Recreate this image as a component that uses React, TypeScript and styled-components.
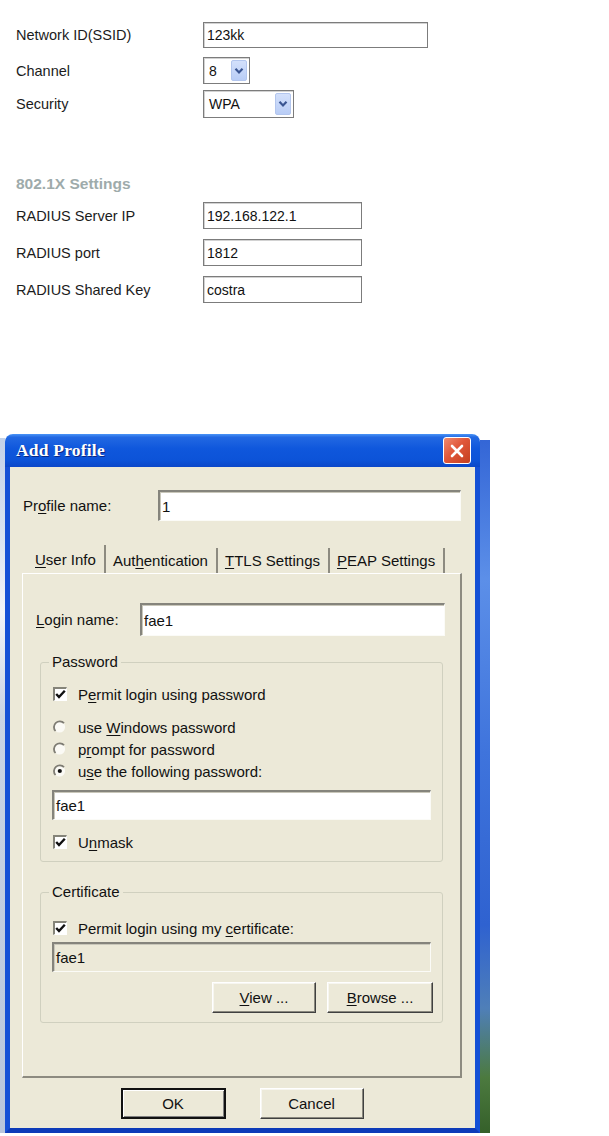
import React from "react";
import styled, { createGlobalStyle } from "styled-components";

const GlobalStyle = createGlobalStyle`
  html, body {
    margin: 0;
    padding: 0;
    background: #fff;
  }
  body {
    font-family: "Liberation Sans", Arial, sans-serif;
    color: #111;
  }
  * {
    box-sizing: border-box;
  }
`;

const Page = styled.div`
  width: 609px;
  height: 1136px;
  background: #fff;
  overflow: hidden;
`;

/* ---------- web router form ---------- */

const TopForm = styled.div`
  padding: 22px 0 0 16px;
`;

const FieldRow = styled.div<{ $h: number; $mt?: number }>`
  display: grid;
  grid-template-columns: 187px auto;
  align-items: center;
  height: ${props => props.$h}px;
  margin-top: ${props => props.$mt ?? 0}px;
`;

const WebLabel = styled.span`
  font-size: 14.5px;
  color: #1c1c1c;
`;

const WebInput = styled.div<{ $w: number }>`
  width: ${props => props.$w}px;
  height: 100%;
  display: flex;
  align-items: center;
  padding-left: 3px;
  background: #fff;
  border: 1px solid #7c7c7c;
  box-shadow: inset 1px 1px 0 #d2d2d2;
  font-size: 14px;
  color: #111;
`;

const WebSelect = styled.div<{ $w: number }>`
  width: ${props => props.$w}px;
  height: 100%;
  display: flex;
  align-items: center;
  justify-content: space-between;
  padding: 2px 2px 2px 5px;
  background: #fff;
  border: 1px solid #7c7c7c;
  box-shadow: inset 1px 1px 0 #d2d2d2;
  font-size: 14px;
  color: #111;
`;

const SelectArrow = styled.div`
  width: 16px;
  align-self: stretch;
  display: flex;
  align-items: center;
  justify-content: center;
  background: linear-gradient(180deg, #d3e0fb 0%, #b9cdf6 100%);
  border: 1px solid #b3c6ee;
  border-radius: 2px;
`;

const SectionHeading = styled.div`
  margin-top: 56px;
  height: 20px;
  line-height: 20px;
  font-size: 15.5px;
  font-weight: bold;
  color: #9eabab;
`;

/* ---------- desktop / dialog ---------- */

const DesktopRow = styled.div`
  display: flex;
  margin-top: 131px;
  height: 699px;
`;

const LeftStrip = styled.div`
  width: 5px;
  margin-top: 4px;
  background: linear-gradient(180deg, #c3d2e8 0%, #dbe4f1 15%, #f2f4f8 25%, #c9d4e4 40%, #b8c6dc 100%);
`;

const RightStrip = styled.div`
  width: 10px;
  margin-top: 6px;
  background: linear-gradient(
    180deg,
    #3466d6 0%,
    #5c8fe8 20%,
    #3f74dc 45%,
    #2f62d0 70%,
    #4f7fb8 82%,
    #4c7a3f 92%,
    #35602a 100%
  );
`;

const Dialog = styled.div`
  width: 475px;
  display: flex;
  flex-direction: column;
`;

const TitleBar = styled.div`
  height: 33px;
  display: flex;
  align-items: center;
  justify-content: space-between;
  padding: 0 9px 0 11px;
  border-radius: 8px 8px 0 0;
  background: linear-gradient(
    180deg,
    #4a94f7 0%,
    #2268e2 10%,
    #0f57dc 45%,
    #0c53d8 80%,
    #0b47c8 100%
  );
`;

const TitleText = styled.span`
  font-family: "Liberation Serif", "Times New Roman", serif;
  font-weight: bold;
  font-size: 17.5px;
  color: #fff;
  text-shadow: 1px 1px 0 #0a2a86;
  letter-spacing: 0.2px;
`;

const CloseButton = styled.div`
  width: 28px;
  height: 27px;
  display: flex;
  align-items: center;
  justify-content: center;
  border: 1px solid #fff;
  border-radius: 3px;
  background: linear-gradient(135deg, #f08a6e 0%, #e0573a 45%, #c43f1f 100%);
`;

const DialogBody = styled.div`
  flex: 1;
  display: flex;
  flex-direction: column;
  padding: 23px 14px 9px 13px;
  background: #ece9d8;
  border: 5px solid #1450d6;
  border-top: none;
  border-bottom-color: #0d3bb8;
`;

const Label = styled.span<{ $w?: number }>`
  width: ${props => (props.$w ? `${props.$w}px` : "auto")};
  flex-shrink: 0;
  font-size: 15px;
  color: #111;
`;

const Key = styled.span`
  text-decoration: underline;
  text-underline-offset: 2px;
`;

const FieldLine = styled.div<{ $h: number }>`
  display: flex;
  align-items: center;
  height: ${props => props.$h}px;
`;

const SunkenInput = styled.div<{ $disabled?: boolean; $h?: number }>`
  flex: 1;
  height: ${props => props.$h ?? 30}px;
  display: flex;
  align-items: center;
  padding-left: 2px;
  font-size: 15px;
  color: #111;
  background: ${props => (props.$disabled ? "#ece9d8" : "#fff")};
  border-style: solid;
  border-width: 2px 1px 1px 2px;
  border-color: #85847c #fbfbf7 #fbfbf7 #85847c;
  box-shadow: inset 1px 1px 0 #c9c7ba;
`;

const TabStrip = styled.div`
  display: flex;
  align-items: flex-end;
  height: 28px;
  margin: 24px -1px 0;
`;

const Tab = styled.div<{ $active?: boolean }>`
  height: ${props => (props.$active ? 28 : 25)}px;
  display: flex;
  align-items: center;
  padding: 0 8px 0 ${props => (props.$active ? 13 : 7)}px;
  font-size: 15px;
  color: #111;
  border-right: 2px solid #8d8b80;
  background: #ece9d8;
`;

const TabPanel = styled.div`
  flex: 1;
  margin: 0 -1px;
  display: flex;
  flex-direction: column;
  padding: 29px 15px 0 13px;
  border-style: solid;
  border-width: 1px 2px 2px 1px;
  border-color: #fff #8d8b80 #8d8b80 #fff;
`;

const Group = styled.fieldset<{ $mt: number; $pb: number }>`
  margin: ${props => props.$mt}px 2px 0 4px;
  padding: 0 12px ${props => props.$pb}px 12px;
  border: 1px solid #d0d0bf;
  border-radius: 3px;
  display: flex;
  flex-direction: column;
  min-width: 0;
`;

const Legend = styled.legend`
  margin-left: -4px;
  padding: 0 3px;
  font-size: 15px;
  line-height: 18px;
  color: #111;
`;

const OptionRow = styled.div<{ $h: number; $mt?: number }>`
  display: flex;
  align-items: center;
  gap: 11px;
  height: ${props => props.$h}px;
  margin-top: ${props => props.$mt ?? 0}px;
  font-size: 15px;
  color: #111;
`;

const CheckBox = styled.div`
  width: 14px;
  height: 14px;
  flex-shrink: 0;
  background: #fff;
  border-style: solid;
  border-width: 2px 1px 1px 2px;
  border-color: #858479 #fff #fff #858479;
  display: flex;
  align-items: center;
  justify-content: center;
`;

const InputWrap = styled.div<{ $mt: number }>`
  display: flex;
  margin: ${props => props.$mt}px -1px 0 -1px;
`;

const GroupButtons = styled.div`
  display: flex;
  justify-content: flex-end;
  gap: 11px;
  margin: 10px -3px 0 0;
`;

const PushButton = styled.div<{ $w: number; $default?: boolean }>`
  width: ${props => props.$w}px;
  height: 31px;
  display: flex;
  align-items: center;
  justify-content: center;
  font-size: 15px;
  color: #111;
  background: #ece9d8;
  border: ${props => (props.$default ? "2px" : "1px")} solid;
  border-color: ${props => (props.$default ? "#111" : "#fff #404040 #404040 #fff")};
  box-shadow: ${props =>
    props.$default
      ? "inset 1px 1px 0 #fff, inset -1px -1px 0 #808080"
      : "inset -1px -1px 0 #8a887e, inset 1px 1px 0 #f7f6f0"};
`;

const DialogButtons = styled.div`
  display: flex;
  justify-content: center;
  gap: 34px;
  margin-top: 10px;
`;

function Chevron() {
  return (
    <svg width="10" height="8" viewBox="0 0 10 8">
      <polyline points="1.5,1.8 5,5.5 8.5,1.8" fill="none" stroke="#3a5592" strokeWidth="2.2" />
    </svg>
  );
}

function Check() {
  return (
    <svg width="11" height="11" viewBox="0 0 11 11">
      <polyline points="1.2,5 4,8 9.8,1.8" fill="none" stroke="#111" strokeWidth="2.4" />
    </svg>
  );
}

function Radio({ checked }: { checked?: boolean }) {
  return (
    <svg width="13" height="14" viewBox="0 0 13 14" style={{ flexShrink: 0, marginRight: 1 }}>
      <circle cx="6.5" cy="7" r="5.6" fill="#fbfaf5" />
      <path d="M11 3.2 A5.6 5.6 0 0 0 2.5 11" fill="none" stroke="#7e7c73" strokeWidth="1.8" />
      {checked && <circle cx="6.8" cy="7" r="2.1" fill="#111" />}
    </svg>
  );
}

function CloseIcon() {
  return (
    <svg width="16" height="16" viewBox="0 0 16 16">
      <path d="M3 3 L13 13 M13 3 L3 13" stroke="#fff" strokeWidth="2.6" strokeLinecap="round" />
    </svg>
  );
}

export default function App() {
  return (
    <Page>
      <GlobalStyle />
      <TopForm>
        <FieldRow $h={26}>
          <WebLabel>Network ID(SSID)</WebLabel>
          <WebInput $w={225}>123kk</WebInput>
        </FieldRow>
        <FieldRow $h={27} $mt={9}>
          <WebLabel>Channel</WebLabel>
          <WebSelect $w={47}>
            <span>8</span>
            <SelectArrow><Chevron /></SelectArrow>
          </WebSelect>
        </FieldRow>
        <FieldRow $h={28} $mt={6}>
          <WebLabel>Security</WebLabel>
          <WebSelect $w={91}>
            <span>WPA</span>
            <SelectArrow><Chevron /></SelectArrow>
          </WebSelect>
        </FieldRow>

        <SectionHeading>802.1X Settings</SectionHeading>

        <FieldRow $h={27} $mt={8}>
          <WebLabel>RADIUS Server IP</WebLabel>
          <WebInput $w={159}>192.168.122.1</WebInput>
        </FieldRow>
        <FieldRow $h={27} $mt={10}>
          <WebLabel>RADIUS port</WebLabel>
          <WebInput $w={159}>1812</WebInput>
        </FieldRow>
        <FieldRow $h={27} $mt={10}>
          <WebLabel>RADIUS Shared Key</WebLabel>
          <WebInput $w={159}>costra</WebInput>
        </FieldRow>
      </TopForm>

      <DesktopRow>
        <LeftStrip />
        <Dialog>
          <TitleBar>
            <TitleText>Add Profile</TitleText>
            <CloseButton><CloseIcon /></CloseButton>
          </TitleBar>
          <DialogBody>
            <FieldLine $h={31}>
              <Label $w={135}>Pr<Key>o</Key>file name:</Label>
              <SunkenInput $h={31}>1</SunkenInput>
            </FieldLine>

            <TabStrip>
              <Tab $active><Key>U</Key>ser Info</Tab>
              <Tab>Aut<Key>h</Key>entication</Tab>
              <Tab><Key>T</Key>TLS Settings</Tab>
              <Tab><Key>P</Key>EAP Settings</Tab>
            </TabStrip>

            <TabPanel>
              <FieldLine $h={33}>
                <Label $w={104}><Key>L</Key>ogin name:</Label>
                <SunkenInput $h={33}>fae1</SunkenInput>
              </FieldLine>

              <Group $mt={17} $pb={9}>
                <Legend>Password</Legend>
                <OptionRow $h={20} $mt={13}>
                  <CheckBox><Check /></CheckBox>
                  <span>P<Key>e</Key>rmit login using password</span>
                </OptionRow>
                <OptionRow $h={22} $mt={12}>
                  <Radio />
                  <span>use <Key>W</Key>indows password</span>
                </OptionRow>
                <OptionRow $h={22}>
                  <Radio />
                  <span>p<Key>r</Key>ompt for password</span>
                </OptionRow>
                <OptionRow $h={22}>
                  <Radio checked />
                  <span>u<Key>s</Key>e the following password:</span>
                </OptionRow>
                <InputWrap $mt={8}>
                  <SunkenInput>fae1</SunkenInput>
                </InputWrap>
                <OptionRow $h={20} $mt={12}>
                  <CheckBox><Check /></CheckBox>
                  <span>U<Key>n</Key>mask</span>
                </OptionRow>
              </Group>

              <Group $mt={21} $pb={9}>
                <Legend>Certificate</Legend>
                <OptionRow $h={20} $mt={17}>
                  <CheckBox><Check /></CheckBox>
                  <span>Permit login using my <Key>c</Key>ertificate:</span>
                </OptionRow>
                <InputWrap $mt={4}>
                  <SunkenInput $disabled>fae1</SunkenInput>
                </InputWrap>
                <GroupButtons>
                  <PushButton $w={104}><span><Key>V</Key>iew ...</span></PushButton>
                  <PushButton $w={106}><span><Key>B</Key>rowse ...</span></PushButton>
                </GroupButtons>
              </Group>
            </TabPanel>

            <DialogButtons>
              <PushButton $w={105} $default>OK</PushButton>
              <PushButton $w={104}>Cancel</PushButton>
            </DialogButtons>
          </DialogBody>
        </Dialog>
        <RightStrip />
      </DesktopRow>
    </Page>
  );
}
